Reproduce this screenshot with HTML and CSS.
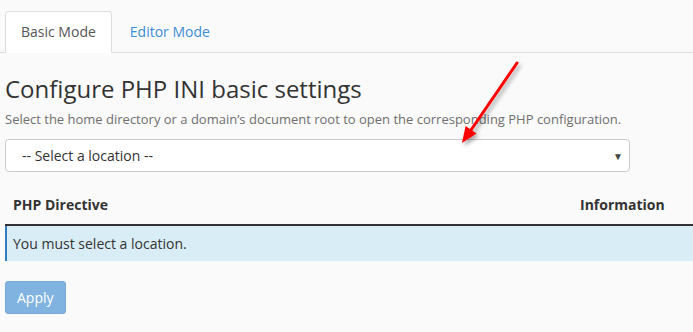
FILE: index.html
```html
<!DOCTYPE html>
<html>
<head lang="en">
    <meta charset="UTF-8">
    <title>MultiPHP INI Editor</title>
    <link rel="stylesheet" href="styles.css">
</head>
<body>
<div class="page">
    <ul class="tabs">
        <li class="active"><a href="#">Basic Mode</a></li>
        <li><a href="#">Editor Mode</a></li>
    </ul>

    <div class="content">
        <h1>Configure PHP INI basic settings</h1>
        <p class="desc">Select the home directory or a domain’s document root to open the corresponding PHP configuration.</p>

        <div class="select">
            <span>-- Select a location --</span>
            <span class="caret">&#9660;</span>
        </div>

        <table class="directives">
            <thead>
            <tr>
                <th class="col-name">PHP Directive</th>
                <th>Information</th>
            </tr>
            </thead>
            <tbody>
            <tr class="info">
                <td colspan="2">You must select a location.</td>
            </tr>
            </tbody>
        </table>

        <button class="btn" disabled>Apply</button>
    </div>

    <!-- red pointer arrow drawn over the screenshot -->
    <svg class="pointer" width="693" height="332" viewBox="0 0 693 332">
        <defs>
            <filter id="shade" x="-50%" y="-50%" width="200%" height="200%">
                <feDropShadow dx="2" dy="3" stdDeviation="2" flood-color="#000" flood-opacity="0.35"/>
            </filter>
        </defs>
        <g filter="url(#shade)">
            <line x1="517" y1="63" x2="471" y2="130" stroke="#ff0000" stroke-width="3" stroke-linecap="round"/>
            <polygon points="462,143 476.5,133.5 465.6,126" fill="#ff0000"/>
        </g>
    </svg>
</div>
</body>
</html>
```

FILE: styles.css
```css
* {
    margin: 0;
    padding: 0;
    box-sizing: border-box;
}

body {
    background-color: #fafafa;
    font-family: "Open Sans", "Liberation Sans", sans-serif;
    font-size: 14px;
    color: #333;
    overflow: hidden;
}

.page {
    position: relative;
    width: 693px;
    height: 332px;
}

ul {
    list-style: none;
}

.tabs {
    display: flex;
    gap: 2px;
    padding: 11px 0 0 5px;
    border-bottom: 1px solid #ddd;
}
.tabs li {
    margin-bottom: -1px;
}
.tabs a {
    display: block;
    padding: 10px 15px;
    line-height: 20px;
    color: #3a8dd1;
    text-decoration: none;
    border: 1px solid transparent;
    border-radius: 4px 4px 0 0;
}
.tabs li.active a {
    color: #555;
    background-color: #fff;
    border-color: #ddd #ddd transparent;
}

.content {
    padding: 0 0 0 5px;
}

h1 {
    margin-top: 19px;
    font-size: 24px;
    font-weight: 400;
    line-height: 34px;
    color: #333;
}

.desc {
    margin-top: 3px;
    font-size: 13px;
    line-height: 20px;
    color: #6f6f6f;
}

.select {
    display: flex;
    justify-content: space-between;
    align-items: center;
    width: 625px;
    height: 33px;
    margin-top: 10px;
    padding: 0 6px 0 16px;
    background-color: #fff;
    border: 1px solid #ccc;
    border-radius: 4px;
    line-height: 20px;
}
.select .caret {
    font-size: 10px;
    color: #444;
}

.directives {
    width: 688px;
    margin-top: 16px;
    border-collapse: collapse;
}
.directives th {
    padding: 7px 7px 9px;
    line-height: 20px;
    text-align: left;
    font-weight: 700;
    border-bottom: 2px solid #333;
}
.directives .col-name {
    width: 567px;
}
.directives td {
    padding: 8px 7px 7px 6px;
    line-height: 20px;
}
.directives tr.info td {
    background-color: #d9edf7;
    border-left: 2px solid #2f7dc0;
}

.btn {
    margin-top: 20px;
    height: 33px;
    padding: 0 11px;
    font-family: inherit;
    font-size: 14px;
    color: #fff;
    background-color: #80b3df;
    border: 1px solid #76a9d6;
    border-radius: 3px;
}

.pointer {
    position: absolute;
    left: 0;
    top: 0;
    pointer-events: none;
}
```
